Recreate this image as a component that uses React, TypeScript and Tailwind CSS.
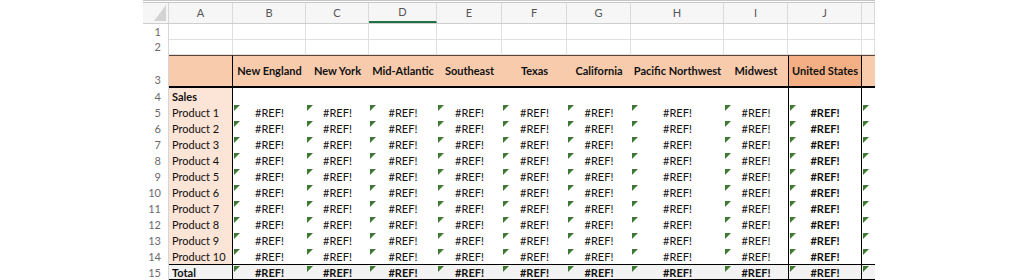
const cols = [
  { key: 'A', w: 'w-[64px]', head: '' },
  { key: 'B', w: 'w-[73px]', head: 'New England' },
  { key: 'C', w: 'w-[63px]', head: 'New York' },
  { key: 'D', w: 'w-[68px]', head: 'Mid-Atlantic' },
  { key: 'E', w: 'w-[65px]', head: 'Southeast' },
  { key: 'F', w: 'w-[65px]', head: 'Texas' },
  { key: 'G', w: 'w-[64px]', head: 'California' },
  { key: 'H', w: 'w-[93px]', head: 'Pacific Northwest' },
  { key: 'I', w: 'w-[64px]', head: 'Midwest' },
  { key: 'J', w: 'w-[74px]', head: 'United States' },
  { key: 'K', w: 'w-[13px]', head: '' },
]

const valueCols = cols.slice(1)
const products = Array.from({ length: 10 }, (_, i) => `Product ${i + 1}`)

// little green "error" flag in a cell's top-left corner
function Flag() {
  return (
    <svg className="absolute left-[1px] top-[1px]" width="6" height="6" viewBox="0 0 6 6">
      <polygon points="0,0 6,0 0,6" fill="#3e7a31" />
    </svg>
  )
}

function RowNum({ n, h, align = 'items-center pt-[2px]' }: { n: number | string; h: string; align?: string }) {
  return (
    <div className={`w-[26px] shrink-0 ${h} flex ${align} justify-end pr-[7px] border-r border-[#d6d6d6] text-[11px] text-[#6b6b6b]`}>
      {n}
    </div>
  )
}

function DataRow({ n, label, total = false }: { n: number; label: string; total?: boolean }) {
  const rowBg = total ? 'bg-[#f2f2f2] border-y border-black' : ''
  return (
    <div className="flex h-[16px]">
      <RowNum n={n} h="h-[16px]" />
      <div className={`w-[64px] shrink-0 border-r border-black pl-[3px] pt-[2px] text-[11px] leading-[14px] flex items-center ${total ? 'bg-[#f2f2f2] border-y font-bold' : 'bg-[#fce4d6]'}`}>
        {label}
      </div>
      {valueCols.map((c) => {
        const isJ = c.key === 'J'
        const isK = c.key === 'K'
        return (
          <div
            key={c.key}
            className={`relative shrink-0 ${c.w} ${rowBg} ${isJ ? 'border-x border-black' : ''} pt-[2px] flex items-center justify-center text-[11px] ${total || isJ ? 'font-bold' : ''}`}
          >
            <Flag />
            {!isK && '#REF!'}
          </div>
        )
      })}
    </div>
  )
}

export default function App() {
  return (
    <div className="w-[1024px] h-[280px] bg-white overflow-hidden font-[family-name:Lato,sans-serif] text-[#111]">
      <div className="pl-[143px] w-[875px]">
        <div className="h-[3px] border-y border-[#c6c6c6]" />

        {/* column letters */}
        <div className="flex h-[21px] bg-[#f6f6f6] border-b border-[#cfcfcf]">
          <div className="w-[26px] shrink-0 border-r border-[#d6d6d6] flex items-end justify-end pr-[2px] pb-[2px]">
            <svg width="12" height="16" viewBox="0 0 12 16">
              <polygon points="12,0 12,16 0,16" fill="#d3d3d3" />
            </svg>
          </div>
          {cols.map((c) => (
            <div
              key={c.key}
              className={`shrink-0 ${c.w} border-r border-[#dadada] flex items-center justify-center text-[11px] text-[#555] ${c.key === 'D' ? 'border-b-2 border-b-[#217346] text-[#333]' : ''}`}
            >
              {c.key === 'K' ? '' : c.key}
            </div>
          ))}
        </div>

        {/* rows 1-2 */}
        {[
          { n: 1, h: 'h-[16px]' },
          { n: 2, h: 'h-[15px]' },
        ].map((r) => (
          <div key={r.n} className={`flex ${r.h}`}>
            <RowNum n={r.n} h={r.h} align="items-end" />
            {cols.map((c) => (
              <div key={c.key} className={`shrink-0 ${c.w} border-r border-b border-[#e0e0e0]`} />
            ))}
          </div>
        ))}

        {/* row 3 region headers */}
        <div className="flex h-[33px]">
          <RowNum n={3} h="h-[33px]" align="items-end" />
          {cols.map((c) => (
            <div
              key={c.key}
              className={`shrink-0 ${c.w} border-t border-t-[#5b4638] border-b-2 border-b-black pt-[1px] flex items-center justify-center text-[11px] font-bold whitespace-nowrap ${c.key === 'J' ? 'bg-[#f4b084] border-x border-x-black' : 'bg-[#f8cbad]'} ${c.key === 'A' ? 'border-r border-r-black' : ''}`}
            >
              {c.head}
            </div>
          ))}
        </div>

        {/* row 4 */}
        <div className="flex h-[16px]">
          <RowNum n={4} h="h-[16px]" />
          <div className="w-[64px] shrink-0 border-r border-black bg-[#fce4d6] pl-[3px] pt-[2px] text-[11px] font-bold flex items-center">Sales</div>
          {valueCols.map((c) => (
            <div key={c.key} className={`shrink-0 ${c.w} ${c.key === 'J' ? 'border-x border-black' : ''}`} />
          ))}
        </div>

        {products.map((p, i) => (
          <DataRow key={p} n={i + 5} label={p} />
        ))}
        <DataRow n={15} label="Total" total />
      </div>
    </div>
  )
}
